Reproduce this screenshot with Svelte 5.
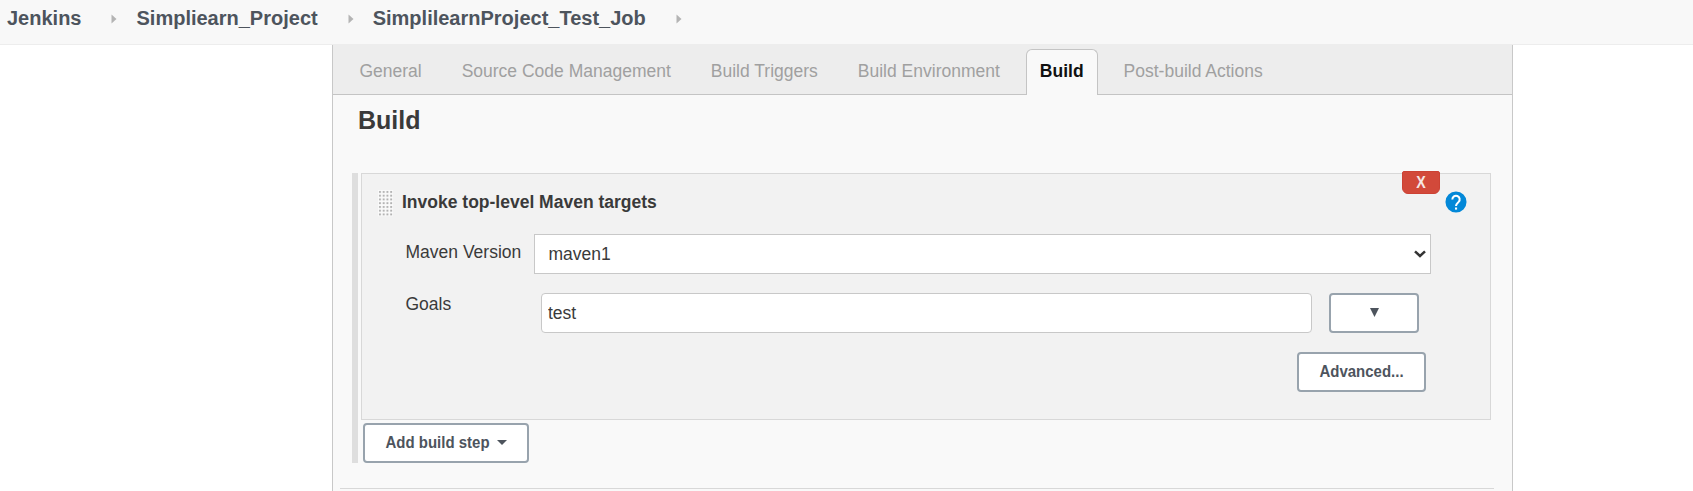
<script>
  const crumbs = ['Jenkins', 'Simpliearn_Project', 'SimplilearnProject_Test_Job'];
  const tabs = [
    'General',
    'Source Code Management',
    'Build Triggers',
    'Build Environment',
    'Build',
    'Post-build Actions'
  ];
  let active = $state('Build');
  let goals = $state('test');
</script>

<div class="page">
  <header class="crumbs">
    {#each crumbs as crumb}
      <a href="#top">{crumb}</a>
      <svg class="sep" width="6" height="10" viewBox="0 0 6 10"><path d="M.5 .5 5.5 5 .5 9.5z" fill="#b4b4b4" /></svg>
    {/each}
  </header>

  <main class="config">
    <nav class="tabs">
      {#each tabs as tab}
        <button class="tab" class:active={tab === active} onclick={() => (active = tab)}>{tab}</button>
      {/each}
    </nav>

    <section class="body">
      <h1>Build</h1>

      <div class="steps">
        <div class="step">
          <button class="delete" aria-label="Delete"><span>X</span></button>
          <div class="head">
            <svg class="grip" width="16" height="27" viewBox="0 0 16 27">
              <defs>
                <pattern id="dots" width="3.75" height="3.75" patternUnits="userSpaceOnUse">
                  <rect width="3.75" height="3.75" fill="#fafafa" />
                  <rect x="1" y="1" width="1.9" height="1.9" fill="#b0b0b0" />
                </pattern>
              </defs>
              <rect width="15" height="26.25" fill="url(#dots)" />
            </svg>
            <h2>Invoke top-level Maven targets</h2>
            <svg class="help" width="22" height="22" viewBox="0 0 24 24">
              <path fill="#0388d8" d="M12 .5a11.5 11.5 0 1 0 0 23 11.5 11.5 0 0 0 0-23z" />
              <path fill="none" stroke="#fff" stroke-width="2.2" d="M8 9.2a4 4 0 1 1 6.9 2.7C13.5 13.3 12 14 12 16.3" />
              <rect x="10.9" y="18" width="2.3" height="2.3" fill="#fff" />
            </svg>
          </div>

          <div class="row version">
            <span class="label">Maven Version</span>
            <div class="select">
              <span>maven1</span>
              <svg width="12" height="8" viewBox="0 0 12 8"><path d="M1 1.3 6 6 11 1.3" fill="none" stroke="#333" stroke-width="2.5" /></svg>
            </div>
          </div>

          <div class="row goals">
            <span class="label">Goals</span>
            <input bind:value={goals} />
            <button class="btn expand" aria-label="Expand">
              <svg width="9" height="9" viewBox="0 0 9 9"><path d="M0 0h9L4.5 9z" fill="#4d545d" /></svg>
            </button>
          </div>

          <div class="row more"><button class="btn advanced"><span>Advanced...</span></button></div>
        </div>
        <button class="btn add">
          <span>Add build step</span>
          <svg width="10" height="5" viewBox="0 0 10 5"><path d="M0 0h10L5 5z" fill="#4d545d" /></svg>
        </button>
      </div>
      <hr />
    </section>
  </main>
</div>

<style>
  :global(body) {
    background: #fff;
    overflow: hidden;
  }
  .page {
    height: 491px;
    overflow: hidden;
    font: 17.5px/22px 'Liberation Sans', Arial, sans-serif;
    color: #3a3a3a;
  }
  .page * {
    box-sizing: border-box;
  }
  button,
  input {
    font: inherit;
    margin: 0;
  }
  .crumbs {
    display: flex;
    align-items: flex-start;
    height: 45px;
    padding: 6px 0 0 7px;
    background: #f8f8f8;
    border-bottom: 1px solid #ededed;
  }
  .crumbs a {
    font-size: 20px;
    line-height: 24px;
    font-weight: bold;
    color: #4d545d;
    text-decoration: none;
  }
  .sep {
    margin: 8px 19px 0 30px;
  }
  .config {
    width: 1181px;
    height: 446px;
    margin-left: 332px;
    border: solid #c8c8c8;
    border-width: 0 1px;
    background: #f9f9f9;
  }
  .tabs {
    display: flex;
    gap: 12px;
    height: 50px;
    padding: 4px 0 0 12.4px;
    background: #ededed;
    border-bottom: 1px solid #c4c4c4;
  }
  .tab {
    height: 46px;
    padding: 0 13px 3px;
    border: 1px solid transparent;
    border-bottom: 0;
    border-radius: 6px 6px 0 0;
    background: none;
    color: #a0a0a0;
  }
  .tab.active {
    background: #f9f9f9;
    border-color: #c4c4c4;
    color: #111;
    font-weight: bold;
  }
  .body {
    padding: 10px 0 0;
  }
  h1 {
    margin: 0 0 38px 25px;
    font-size: 25px;
    line-height: 30px;
  }
  .steps {
    margin-left: 19px;
    width: 1139px;
    height: 290px;
    border-left: 6px solid #dedede;
    padding-left: 3px;
  }
  .step {
    position: relative;
    height: 247px;
    border: 1px solid #d8d8d8;
    background: #f2f2f2;
  }
  .delete {
    position: absolute;
    top: -3px;
    right: 50px;
    width: 38px;
    height: 23px;
    padding: 0;
    border: 1px solid #cc4234;
    border-radius: 2px 2px 6px 6px;
    background: #d2493a;
    color: #f6e6e4;
    font: bold 15px/19px 'Liberation Sans', Arial, sans-serif;
  }
  .delete span {
    display: inline-block;
    transform: scale(0.95, 1.06);
  }
  .head {
    display: flex;
    height: 60px;
    padding: 16px 23px 0 16px;
  }
  h2 {
    margin: 1px auto 0 8px;
    font-size: 17.5px;
    line-height: 22px;
  }
  .help {
    margin-top: 0.5px;
  }
  .row {
    display: flex;
    padding-left: 43.5px;
  }
  .label {
    width: 128.5px;
    margin-top: 7px;
  }
  .version {
    height: 59px;
  }
  .select {
    display: flex;
    align-items: center;
    justify-content: space-between;
    width: 897px;
    height: 40px;
    padding: 0 4px 0 13.5px;
    border: 1px solid #c8c8c8;
    background: #fff;
  }
  .goals {
    height: 59px;
  }
  .goals .label {
    width: 135.5px;
    margin-top: 0;
  }
  input {
    width: 771px;
    height: 40px;
    padding: 0 6px;
    border: 1px solid #c8c8c8;
    border-radius: 4px;
    background: #fff;
    color: inherit;
  }
  .btn {
    display: flex;
    align-items: center;
    justify-content: center;
    height: 40px;
    padding: 0 0 1px;
    border: 2px solid #98a3ad;
    border-radius: 4px;
    background: #fff;
    color: #4d545d;
    font-size: 15px;
    font-weight: bold;
  }
  .btn span {
    transform: scaleY(1.08);
  }
  .expand {
    width: 90px;
    margin-left: 17px;
  }
  .advanced {
    width: 129px;
    margin-left: 891.5px;
  }
  .add {
    gap: 7px;
    width: 166px;
    margin: 3px 0 0 2px;
  }
  hr {
    width: 1154px;
    margin: 25px 0 0 7px;
    border: 0;
    border-top: 1px solid #d8d8d8;
  }
</style>
